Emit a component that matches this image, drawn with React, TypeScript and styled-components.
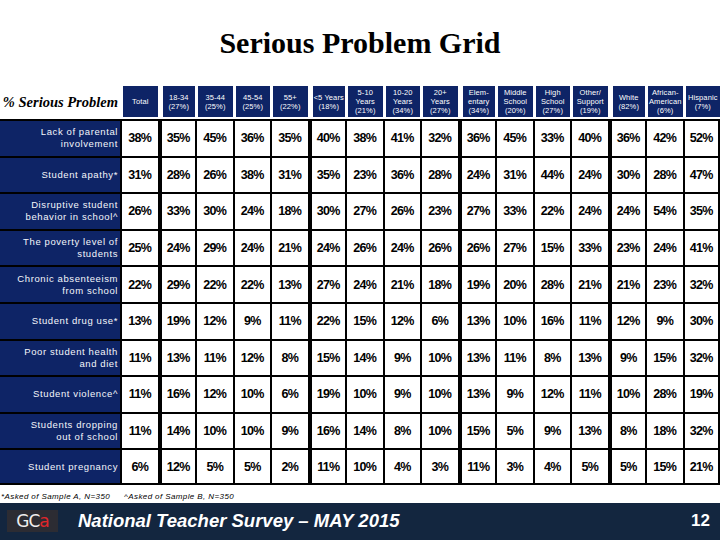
import React from "react";
import styled, { createGlobalStyle } from "styled-components";

const GlobalStyle = createGlobalStyle`
  html, body {
    margin: 0;
    padding: 0;
    background: #ffffff;
  }
`;

const NAVY = "#0e2466";

const headers = [
  "Total",
  "18-34\n(27%)",
  "35-44\n(25%)",
  "45-54\n(25%)",
  "55+\n(22%)",
  "<5 Years\n(18%)",
  "5-10\nYears\n(21%)",
  "10-20\nYears\n(34%)",
  "20+\nYears\n(27%)",
  "Elem-\nentary\n(34%)",
  "Middle\nSchool\n(20%)",
  "High\nSchool\n(27%)",
  "Other/\nSupport\n(19%)",
  "White\n(82%)",
  "African-\nAmerican\n(6%)",
  "Hispanic\n(7%)",
];

// columns that open a new group get the heavy rule on their left
const groupStarts = [1, 5, 9, 13];

const rows: { label: string; values: number[] }[] = [
  { label: "Lack of parental\ninvolvement", values: [38, 35, 45, 36, 35, 40, 38, 41, 32, 36, 45, 33, 40, 36, 42, 52] },
  { label: "Student apathy*", values: [31, 28, 26, 38, 31, 35, 23, 36, 28, 24, 31, 44, 24, 30, 28, 47] },
  { label: "Disruptive student\nbehavior in school^", values: [26, 33, 30, 24, 18, 30, 27, 26, 23, 27, 33, 22, 24, 24, 54, 35] },
  { label: "The poverty level of\nstudents", values: [25, 24, 29, 24, 21, 24, 26, 24, 26, 26, 27, 15, 33, 23, 24, 41] },
  { label: "Chronic absenteeism\nfrom school", values: [22, 29, 22, 22, 13, 27, 24, 21, 18, 19, 20, 28, 21, 21, 23, 32] },
  { label: "Student drug use*", values: [13, 19, 12, 9, 11, 22, 15, 12, 6, 13, 10, 16, 11, 12, 9, 30] },
  { label: "Poor student health\nand diet", values: [11, 13, 11, 12, 8, 15, 14, 9, 10, 13, 11, 8, 13, 9, 15, 32] },
  { label: "Student violence^", values: [11, 16, 12, 10, 6, 19, 10, 9, 10, 13, 9, 12, 11, 10, 28, 19] },
  { label: "Students dropping\nout of school", values: [11, 14, 10, 10, 9, 16, 14, 8, 10, 15, 5, 9, 13, 8, 18, 32] },
  { label: "Student pregnancy", values: [6, 12, 5, 5, 2, 11, 10, 4, 3, 11, 3, 4, 5, 5, 15, 21] },
];

const Page = styled.div`
  width: 720px;
  height: 540px;
  display: flex;
  flex-direction: column;
  overflow: hidden;
  font-family: "Liberation Sans", Arial, sans-serif;
`;

const Title = styled.h1`
  margin: 0;
  height: 86px;
  display: flex;
  align-items: center;
  justify-content: center;
  font-family: "Liberation Serif", "Times New Roman", serif;
  font-weight: bold;
  font-size: 30px;
  color: #000;
`;

const Grid = styled.div`
  display: grid;
  grid-template-columns: 120px repeat(16, 1fr);
  grid-template-rows: 33px repeat(10, 36.6px);
  width: 720px;
`;

const Corner = styled.div`
  display: flex;
  align-items: center;
  justify-content: flex-end;
  padding-right: 2px;
  font-family: "Liberation Serif", "Times New Roman", serif;
  font-style: italic;
  font-weight: bold;
  font-size: 14.5px;
  white-space: nowrap;
  color: #000;
`;

const HeadCell = styled.div<{ $group: boolean }>`
  margin: 0 0 2px ${(p) => (p.$group ? 5 : 3)}px;
  background: ${NAVY};
  color: #fff;
  display: flex;
  align-items: center;
  justify-content: center;
  text-align: center;
  white-space: pre-line;
  font-size: 7.5px;
  line-height: 9px;
  letter-spacing: 0.1px;
`;

const Label = styled.div<{ $last: boolean }>`
  background: ${NAVY};
  color: #f4f6fb;
  border-top: 2px solid #000;
  border-bottom: ${(p) => (p.$last ? "2px solid #000" : "none")};
  display: flex;
  align-items: center;
  justify-content: flex-end;
  text-align: right;
  white-space: pre-line;
  padding-right: 2px;
  font-size: 9.5px;
  line-height: 12px;
  letter-spacing: 0.6px;
`;

const Cell = styled.div<{ $group: boolean; $lastCol: boolean; $lastRow: boolean }>`
  background: #fff;
  border-top: 2px solid #000;
  border-left: ${(p) => (p.$group ? 4 : 2)}px solid #000;
  border-right: ${(p) => (p.$lastCol ? "2px solid #000" : "none")};
  border-bottom: ${(p) => (p.$lastRow ? "2px solid #000" : "none")};
  display: flex;
  align-items: center;
  justify-content: center;
  font-weight: bold;
  font-size: 12.5px;
  letter-spacing: -0.7px;
  color: #000;
`;

const Note = styled.div`
  height: 18px;
  display: flex;
  align-items: flex-end;
  gap: 14px;
  padding: 0 0 2px 1px;
  box-sizing: border-box;
  font-size: 8px;
  font-style: italic;
  letter-spacing: 0.4px;
  color: #000;
`;

const Bar = styled.footer`
  flex: 1;
  background: #13263f;
  display: flex;
  align-items: center;
  padding: 0 10px 0 7px;
`;

const Logo = styled.div`
  width: 51px;
  height: 22px;
  background: #2c2c33;
  display: flex;
  align-items: center;
  justify-content: center;
  font-family: "DejaVu Sans", sans-serif;
  font-size: 17px;
  color: #eeeeee;
  letter-spacing: -1px;
`;

const Red = styled.span`
  color: #e0262b;
`;

const BarTitle = styled.div`
  flex: 1;
  margin-left: 20px;
  font-weight: bold;
  font-style: italic;
  font-size: 18.5px;
  color: #fff;
`;

const PageNum = styled.div`
  font-weight: bold;
  font-size: 17px;
  color: #fff;
`;

export default function App() {
  return (
    <Page>
      <GlobalStyle />
      <Title>Serious Problem Grid</Title>
      <Grid>
        <Corner>% Serious Problem</Corner>
        {headers.map((h, i) => (
          <HeadCell key={h} $group={groupStarts.includes(i)}>
            {h}
          </HeadCell>
        ))}
        {rows.map((r, ri) => (
          <React.Fragment key={r.label}>
            <Label $last={ri === rows.length - 1}>{r.label}</Label>
            {r.values.map((v, ci) => (
              <Cell
                key={ci}
                $group={groupStarts.includes(ci)}
                $lastCol={ci === r.values.length - 1}
                $lastRow={ri === rows.length - 1}
              >
                {v}%
              </Cell>
            ))}
          </React.Fragment>
        ))}
      </Grid>
      <Note>
        <span>*Asked of Sample A, N=350</span>
        <span>^Asked of Sample B, N=350</span>
      </Note>
      <Bar>
        <Logo>
          GC<Red>a</Red>
        </Logo>
        <BarTitle>National Teacher Survey – MAY 2015</BarTitle>
        <PageNum>12</PageNum>
      </Bar>
    </Page>
  );
}
